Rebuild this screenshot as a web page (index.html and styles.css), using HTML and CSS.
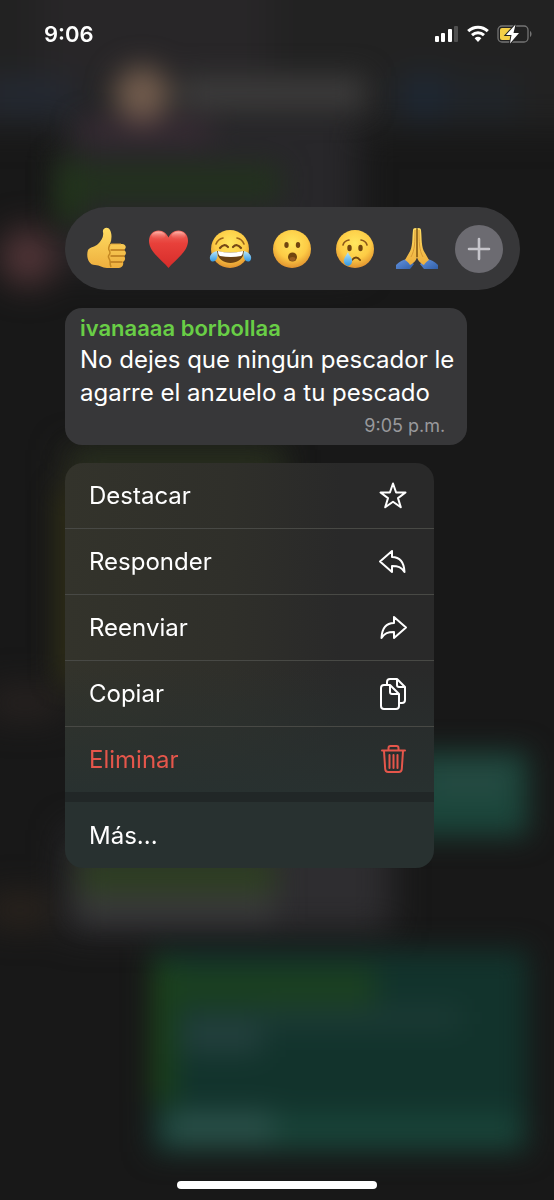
FILE: index.html
```html
<!DOCTYPE html>
<html lang="es">
<head>
  <meta charset="UTF-8">
  <meta name="viewport" content="width=device-width, initial-scale=1.0">
  <title>Opciones del mensaje</title>
  <link rel="stylesheet" href="styles.css">
</head>
<body>
  <!-- Blurred chat behind the menu -->
  <svg class="backdrop" viewBox="0 0 554 1200" preserveAspectRatio="none" aria-hidden="true">
    <defs>
      <filter id="blur" x="-50%" y="-50%" width="200%" height="200%" color-interpolation-filters="sRGB"><feGaussianBlur stdDeviation="17"/></filter>
      <filter id="soft" x="-50%" y="-50%" width="200%" height="200%" color-interpolation-filters="sRGB"><feGaussianBlur stdDeviation="14"/></filter>
    </defs>
    <rect width="554" height="1200" fill="#181818"/>
    <g filter="url(#blur)">
      <rect x="-60" y="-60" width="680" height="188" fill="#222222"/>
      <rect x="40" y="-60" width="230" height="150" fill="#282628"/>
      <rect x="66" y="110" width="292" height="160" fill="#28272a"/>
      <rect x="-20" y="80" width="95" height="34" fill="#242a35"/>
      <rect x="400" y="78" width="50" height="38" fill="#1d2938"/>
      <rect x="465" y="84" width="50" height="30" fill="#20272f"/>
      <rect x="66" y="830" width="325" height="102" fill="#2e2d30"/>
      <rect x="66" y="450" width="214" height="240" fill="#2d2d20"/>
      <rect x="-10" y="688" width="70" height="30" fill="#292321"/>
      <rect x="-10" y="895" width="60" height="30" fill="#2d251e"/>
      <circle cx="28" cy="257" r="28" fill="#56373a"/>
    </g>
    <g filter="url(#soft)">
      <rect x="180" y="76" width="185" height="34" fill="#3d3c3c"/>
      <rect x="80" y="122" width="130" height="18" fill="#3c2b36"/>
      <circle cx="142" cy="94" r="28" fill="#725c4d"/>
      <rect x="58" y="160" width="22" height="60" fill="#213d16"/>
      <rect x="66" y="166" width="214" height="34" fill="#22321d"/>
      <rect x="76" y="454" width="210" height="12" fill="#21301c"/>
      <rect x="60" y="490" width="20" height="190" fill="#302e12"/>
      <rect x="340" y="752" width="188" height="84" fill="#1b463b"/>
      <rect x="430" y="766" width="80" height="30" fill="#264b43"/>
      <rect x="80" y="860" width="195" height="32" fill="#2d4020"/>
      <rect x="80" y="895" width="195" height="22" fill="#3b3c3c"/>
      <rect x="152" y="950" width="376" height="202" fill="#12332c"/>
      <rect x="154" y="962" width="18" height="140" fill="#1d4816"/>
      <rect x="165" y="968" width="210" height="38" fill="#1b4020"/>
      <rect x="182" y="1014" width="80" height="40" fill="#223f3c"/>
      <rect x="260" y="1008" width="200" height="20" fill="#1d3b36"/>
      <rect x="160" y="1115" width="360" height="34" fill="#194439"/>
      <rect x="168" y="1112" width="105" height="30" fill="#2b514a"/>
    </g>
  </svg>

  <div class="screen">
    <header class="status-bar">
      <time class="clock">9:06</time>
      <div class="status-icons">
        <svg width="26" height="18" viewBox="0 0 26 18" role="img" aria-label="Señal">
          <g fill="#fff">
            <rect x="1" y="11" width="4" height="6" rx="1"/>
            <rect x="7" y="8" width="4" height="9" rx="1"/>
            <rect x="14" y="4" width="4" height="13" rx="1"/>
          </g>
          <rect x="20" y="1" width="4" height="16" rx="1" fill="#505050"/>
        </svg>
        <svg width="22" height="18" viewBox="0 0 22 18" role="img" aria-label="Wi-Fi">
          <g fill="none" stroke="#fff" stroke-width="3">
            <path d="M1.2 6.2C6.8.8 15.2.8 20.8 6.2"/>
            <path d="M5 10.2c3.5-3.2 8.5-3.2 12 0"/>
          </g>
          <path d="M7.6 13.2c2-1.8 4.8-1.8 6.8 0L11 17z" fill="#fff"/>
        </svg>
        <svg width="36" height="20" viewBox="0 0 36 20" role="img" aria-label="Batería cargando">
          <rect x="2" y="2" width="30" height="16" rx="4" fill="none" stroke="#747474" stroke-width="1.3"/>
          <path d="M34 7c2 1 2 5 0 6z" fill="#747474"/>
          <path d="M6 4h9v12H6q-2 0-2-2V6q0-2 2-2z" fill="#f5cf46"/>
          <path d="M19.500.5 10 11h5.500L14 19.500 23 9h-5.500z" fill="#fff" stroke="#222" stroke-width="2" paint-order="stroke"/>
        </svg>
      </div>
    </header>

    <main class="content">
      <div class="reactions">
        <button class="reaction" aria-label="Me gusta">
          <svg viewBox="0 0 48 48">
            <defs>
              <linearGradient id="skin" x2="0" y2="1"><stop stop-color="#ffdc62"/><stop offset="1" stop-color="#eeaf3e"/></linearGradient>
            </defs>
            <path d="M6 25c2-3 7-3 10-6 3-3 6-7 5-12-1-4 5-6 7-2 2 4 2 9 0 14h12c4 0 5 4 2 6 3 2 2 5 0 6 2 2 1 5-1 6 1 3-1 6-4 6H25c-5 0-7-3-12-3-7 0-9-9-7-15z" fill="url(#skin)"/>
            <path d="M28 19c-1 3-2 4-1 6s2 3 0 5 1 4 1 6 0 4 1 6" fill="none" stroke="#c58822" stroke-width="1.5"/>
            <path d="M29 25h13M29 31h13M29 37h11" stroke="#b8781d" stroke-width="1.4" stroke-linecap="round"/>
            <path d="M29 19h10" stroke="#dba136" stroke-width="1"/>
          </svg>
        </button>
        <button class="reaction" aria-label="Me encanta">
          <svg viewBox="0 0 48 48">
            <defs>
              <linearGradient id="heart" x2="0" y2="1"><stop stop-color="#f06a60"/><stop offset=".35" stop-color="#e8403a"/><stop offset="1" stop-color="#d62c2a"/></linearGradient>
              <linearGradient id="shine" x2="0" y2="1"><stop stop-color="#ffb9ad"/><stop offset="1" stop-color="#f0605a" stop-opacity="0"/></linearGradient>
            </defs>
            <path d="M24.5 43C19 36 5 27 5 16 5 9.5 9.5 5.5 14.5 5.5c5 0 8 3 10 7 2-4 5-7 10-7 5 0 9.5 4 9.5 10.5C44 27 30 36 24.5 43z" fill="url(#heart)"/>
            <ellipse cx="14.5" cy="10.5" rx="7" ry="4" fill="url(#shine)"/>
            <ellipse cx="34.5" cy="10.5" rx="7" ry="4" fill="url(#shine)"/>
          </svg>
        </button>
        <button class="reaction" aria-label="Me divierte">
          <svg viewBox="0 0 48 48">
            <defs>
              <radialGradient id="face" cx=".5" cy=".35" r=".68"><stop stop-color="#ffe75f"/><stop offset=".6" stop-color="#fdcb45"/><stop offset="1" stop-color="#dd8b2c"/></radialGradient>
              <linearGradient id="tear" x2="0" y2="1"><stop stop-color="#b9e7fb"/><stop offset="1" stop-color="#3298e2"/></linearGradient>
            </defs>
            <circle cx="24" cy="24" r="19" fill="url(#face)"/>
            <path d="M11 26q13 3 27 0c0 7-6 12-13.5 12S11 33 11 26z" fill="#674015"/>
            <path d="M12 26q12 3 25 0 0 4-2 5-10 2-21 0-2-1-2-5z" fill="#fff"/>
            <path d="M14 23q4-5 8-1M27 22q4-4 8 1" fill="none" stroke="#754816" stroke-width="2.2" stroke-linecap="round"/>
            <path d="M10 19q2-5 7-6M31 13q5 1 7 6" fill="none" stroke="#9a641c" stroke-width="1.6" stroke-linecap="round"/>
            <path d="M11 26C7 27 3 30 4 34s6 3 7-1q1-3 0-7zM38 26c4 1 8 4 7 8s-6 3-7-1q-1-3 0-7z" fill="url(#tear)"/>
          </svg>
        </button>
        <button class="reaction" aria-label="Me asombra">
          <svg viewBox="0 0 48 48">
            <circle cx="24" cy="24" r="19" fill="url(#face)"/>
            <g fill="#70450f">
              <ellipse cx="18.5" cy="20" rx="2.2" ry="3"/>
              <ellipse cx="30" cy="20" rx="2.2" ry="3"/>
              <ellipse cx="24.5" cy="32" rx="4.5" ry="4.5"/>
            </g>
            <ellipse cx="24.5" cy="34" rx="3" ry="2" fill="#965d20"/>
          </svg>
        </button>
        <button class="reaction" aria-label="Me entristece">
          <svg viewBox="0 0 48 48">
            <circle cx="24" cy="24" r="19" fill="url(#face)"/>
            <ellipse cx="18.5" cy="23" rx="2.2" ry="3.2" fill="#70450f"/>
            <ellipse cx="29.5" cy="23" rx="2.2" ry="3.2" fill="#70450f"/>
            <path d="M12 20q1-4 6-5M30 15q5 1 6 5" fill="none" stroke="#8c581b" stroke-width="1.6" stroke-linecap="round"/>
            <path d="M21 35q4-5 8 0" fill="none" stroke="#70450f" stroke-width="2" stroke-linecap="round"/>
            <path d="M17 27c-2 4-5 7-4 10 1 5 7 5 8 0C22 33 18 31 17 27z" fill="url(#tear)"/>
          </svg>
        </button>
        <button class="reaction" aria-label="Gracias">
          <svg viewBox="0 0 48 48">
            <defs>
              <linearGradient id="sleeve" x2="1" y2="1"><stop stop-color="#6494e0"/><stop offset="1" stop-color="#315fa8"/></linearGradient>
            </defs>
            <path d="M14 34q-6 1-11 6v4h14l4-5z" fill="url(#sleeve)"/>
            <path d="M34 34q6 1 11 6v4H31l-4-5z" fill="url(#sleeve)"/>
            <path d="M24 4c-1-2-4-1-4 1-1 9 0 17-4 23l-4 7c2 1 4 3 5 5 4-2 7-5 7-9z" fill="url(#skin)"/>
            <path d="M24 4c1-2 4-1 4 1 1 9 0 17 4 23l4 7c-2 1-4 3-5 5-4-2-7-5-7-9z" fill="url(#skin)"/>
            <path d="M24 4v28" stroke="#7d500f" stroke-width="1.5"/>
            <path d="M22 5c0 11 0 20-4 27M26 5c0 11 0 20 4 27" fill="none" stroke="#d99935" stroke-width="1"/>
          </svg>
        </button>
        <button class="reaction add" aria-label="Más reacciones">
          <svg viewBox="0 0 48 48">
            <path d="M24 14v20M14 24h20" stroke="#c6c5cb" stroke-width="2.6" stroke-linecap="round"/>
          </svg>
        </button>
      </div>

      <article class="message">
        <h1 class="sender">ivanaaaa borbollaa</h1>
        <p class="text">No dejes que ningún pescador le<br>agarre el anzuelo a tu pescado</p>
        <time class="sent">9:05 p.m.</time>
      </article>

      <div class="menu">
        <button class="item">
          <span>Destacar</span>
          <svg class="icon" viewBox="0 0 32 32"><path d="M16 3.5l3.100 9h9.400l-7.500 5.600 2.800 9.200L16 21.800l-7.800 5.500L11 18.100l-7.500-5.600h9.400z"/></svg>
        </button>
        <button class="item">
          <span>Responder</span>
          <svg class="icon" viewBox="0 0 32 32"><path d="M3 15.500 15 5v6c8 0 12 5 12.500 15-3-5-6.500-6-12.500-6v6z"/></svg>
        </button>
        <button class="item">
          <span>Reenviar</span>
          <svg class="icon" viewBox="0 0 32 32"><path d="M29 15.500 17 5v6C9 11 5 16 4.500 26 7.500 21 11 20 17 20v6z"/></svg>
        </button>
        <button class="item">
          <span>Copiar</span>
          <svg class="icon" viewBox="0 0 32 32">
            <path d="M10 7V4q0-3 3-3h7l8 8v13q0 3-3 3h-3M20 1v6q0 2 2 2h6"/>
            <path d="M7 7h6l9 9v12q0 3-3 3H7q-3 0-3-3V10q0-3 3-3zM13 7v7q0 2 2 2h7"/>
          </svg>
        </button>
        <button class="item danger">
          <span>Eliminar</span>
          <svg class="icon" viewBox="0 0 32 32"><path d="M5 6.500h23M11.500 6V4q0-2 2-2h6q2 0 2 2v2M7 7l1.200 18q.2 3 3 3h10.600q2.800 0 3-3L26 7M12.500 11v13M16.500 11v13M20.500 11v13"/></svg>
        </button>
        <button class="item more"><span>Más...</span></button>
      </div>
    </main>

    <div class="home-indicator"></div>
  </div>
</body>
</html>
```
FILE: styles.css
```css
* {
  box-sizing: border-box;
}
body {
  margin: 0;
  background: #181818;
  color: #fff;
  font-family: Inter, "Liberation Sans", sans-serif;
}
button {
  border: 0;
  padding: 0;
  background: none;
  color: inherit;
  font: inherit;
  cursor: pointer;
}
svg {
  display: block;
}
.backdrop {
  position: fixed;
  inset: 0;
  z-index: -1;
  width: 100%;
  height: 100%;
}
.screen {
  display: flex;
  flex-direction: column;
  min-height: 100vh;
}

/* Status bar */
.status-bar {
  display: flex;
  justify-content: space-between;
  align-items: center;
  height: 68px;
  padding: 0 22px 0 44px;
}
.clock {
  font-size: 22px;
  font-weight: 600;
}
.status-icons {
  display: flex;
  align-items: center;
  gap: 7px;
}

.content {
  display: flex;
  flex-direction: column;
  align-items: flex-start;
  gap: 18px;
  padding: 139px 34px 0 65px;
}

/* Reactions */
.reactions {
  display: flex;
  align-items: center;
  justify-content: space-between;
  width: 100%;
  max-width: 480px;
  height: 83px;
  padding: 0 17px;
  border-radius: 42px;
  background: #373739;
}
.reaction {
  width: 48px;
  height: 48px;
}
.add {
  border-radius: 50%;
  background: #6c6b71;
}

/* Message bubble */
.message {
  display: flex;
  flex-direction: column;
  padding: 5px 13px 3px 15px;
  border-radius: 17px;
  background: #373739;
}
.sender {
  margin: 0;
  color: #69ce46;
  font-size: 22px;
  font-weight: 600;
  line-height: 30px;
}
.text {
  margin: 0;
  font-size: 24px;
  line-height: 33px;
}
.sent {
  align-self: flex-end;
  margin-right: 9px;
  color: #99999c;
  font-size: 18px;
  line-height: 33px;
}

/* Context menu */
.menu {
  width: 100%;
  max-width: 369px;
  border-radius: 18px;
  overflow: hidden;
  background:
    linear-gradient(to bottom, rgba(40, 49, 48, 0) 50%, #283130 82%),
    linear-gradient(to right, #33332b, #2f2f2a 45%, #292929 75%);
}
.item {
  display: flex;
  align-items: center;
  justify-content: space-between;
  width: 100%;
  height: 66px;
  padding: 0 25px 0 24px;
  border-bottom: 1px solid #484945;
  font-size: 24px;
  text-align: left;
}
.icon {
  width: 32px;
  height: 32px;
  fill: none;
  stroke: currentColor;
  stroke-width: 2;
  stroke-linecap: round;
  stroke-linejoin: round;
}
.danger {
  height: 65px;
  border-bottom: 0;
  color: #e5564b;
}
.more {
  height: 76px;
  border-top: 10px solid #212727;
  border-bottom: 0;
}

.home-indicator {
  width: 36%;
  height: 8px;
  margin: auto auto 11px;
  border-radius: 4px;
  background: #fff;
}
```
